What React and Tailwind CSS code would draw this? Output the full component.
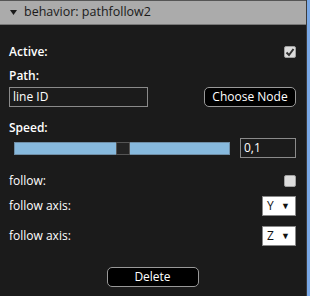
import React from 'react';

const Check = ({ checked }) => (
  <span className="w-[12px] h-[12px] rounded-[2px] bg-[#dcdcdc] border border-[#a0a0a0] flex items-center justify-center">
    {checked && (
      <svg width="10" height="10" viewBox="0 0 10 10">
        <path d="M1.5 5.5 L4 8 L8.5 2" fill="none" stroke="#333" strokeWidth="2" />
      </svg>
    )}
  </span>
);

const Select = ({ value }) => (
  <div className="w-[34px] h-[20px] bg-white border border-[#888] flex items-center justify-between pl-[4px] pr-[5px] text-[12px] text-[#111]">
    <span>{value}</span>
    <span className="text-[9px]">▼</span>
  </div>
);

export default function App() {
  return (
    <div className="w-[310px] h-[296px] flex bg-[#1b1b1b] font-['Open_Sans',sans-serif] text-[12px] text-white overflow-hidden">
      <div className="w-[307px] flex flex-col border-r border-[#3a3a3a]">
        {/* header */}
        <div className="h-[25px] bg-[#ababab] border-t border-[#555] border-b border-b-[#777] flex items-center pl-[10px] text-[#1a1a1a] text-[12.5px]">
          <svg width="7" height="5" viewBox="0 0 7 5" className="mr-[7px]">
            <path d="M0 0 H7 L3.5 5 Z" fill="#1a1a1a" />
          </svg>
          <span>behavior: pathfollow2</span>
        </div>

        <div className="flex flex-col px-[9px] pr-[10px]">
          <div className="flex items-center justify-between mt-[20px] h-[14px]">
            <span className="font-semibold">Active:</span>
            <Check checked />
          </div>

          <div className="mt-[9px] font-semibold leading-[16px]">Path:</div>
          <div className="flex items-center justify-between mt-[3px]">
            <div className="w-[139px] h-[20px] border border-[#8a8a8a] flex items-center px-[3px]">line ID</div>
            <button className="w-[92px] h-[20px] rounded-[5px] bg-black border border-[#999] text-white text-[12px] leading-none">Choose Node</button>
          </div>

          <div className="mt-[13px] font-semibold leading-[16px]">Speed:</div>
          <div className="flex items-center justify-between mt-[2px] pl-[5px]">
            <div className="w-[216px] h-[13px] bg-[#87b9dd] border border-[#6f8ea6] flex justify-start relative">
              <div className="absolute left-[101px] top-[-1px] w-[14px] h-[13px] bg-[#232323] border border-[#555]" />
            </div>
            <div className="w-[56px] h-[20px] border border-[#8a8a8a] flex items-center px-[3px]">0,1</div>
          </div>

          <div className="flex items-center justify-between mt-[16px] h-[14px]">
            <span>follow:</span>
            <Check />
          </div>
          <div className="flex items-center justify-between mt-[8px]">
            <span>follow axis:</span>
            <Select value="Y" />
          </div>
          <div className="flex items-center justify-between mt-[10px]">
            <span>follow axis:</span>
            <Select value="Z" />
          </div>

          <div className="flex justify-center mt-[21px]">
            <button className="w-[92px] h-[20px] rounded-[5px] bg-black border border-[#999] text-white text-[12px] leading-none">Delete</button>
          </div>
        </div>
      </div>
      <div className="w-[3px] bg-[#79a8e6]" />
    </div>
  );
}
